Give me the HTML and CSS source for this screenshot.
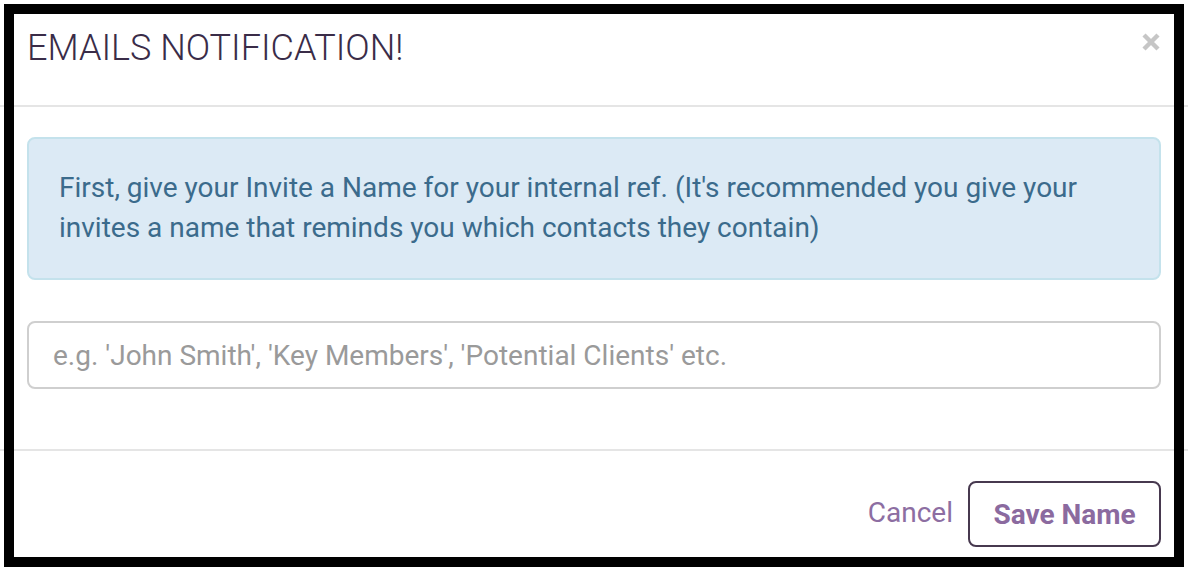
FILE: index.html
```html
<!DOCTYPE html>
<html>
<head>
<meta charset="utf-8">
<link rel="stylesheet" href="styles.css">
</head>
<body>
<div class="modal">
  <div class="modal-header">
    <h4 class="modal-title">EMAILS NOTIFICATION!</h4>
    <button class="close" aria-label="Close">
      <svg width="18" height="18" viewBox="0 0 18 18"><path d="M2 2 L16 16 M16 2 L2 16" stroke="#c6c6c6" stroke-width="4.4" fill="none"/></svg>
    </button>
  </div>
  <div class="modal-body">
    <div class="alert">First, give your Invite a Name for your internal ref. (It's recommended you give your invites a name that reminds you which contacts they contain)</div>
    <input class="form-control" type="text" placeholder="e.g. 'John Smith', 'Key Members', 'Potential Clients' etc.">
  </div>
  <div class="modal-footer">
    <a class="btn-link" href="#">Cancel</a>
    <button class="btn-save">Save Name</button>
  </div>
  <div class="frame"></div>
</div>
</body>
</html>
```
FILE: styles.css
```css
* { box-sizing: border-box; }
html, body { margin: 0; padding: 0; background: #fff; }
body { font-family: Roboto, "Noto Sans", sans-serif; width: 1188px; height: 568px; overflow: hidden; }
.modal { position: relative; width: 1188px; height: 568px; }
.modal-header {
  height: 107px;
  padding: 28px 27px 0 27px;
  border-bottom: 2px solid #e5e5e5;
  display: flex;
  justify-content: space-between;
  align-items: flex-start;
}
.modal-title {
  margin: 0;
  font-size: 36px;
  line-height: 40px;
  font-weight: 300;
  color: #3a2c48;
}
.close {
  border: 0; background: none; padding: 0; margin: 5px 1px 0 0;
  width: 18px; height: 18px; cursor: pointer; display: block;
}
.close svg { display: block; }
.modal-body { padding: 30px 27px 0 27px; height: 342px; }
.alert {
  background: #dceaf5;
  border: 2px solid #c4e2ec;
  border-radius: 8px;
  color: #3b6b8c;
  padding: 29px 30px 30px 30px;
  font-size: 28px;
  line-height: 40px;
  height: 143px;
}
.form-control {
  display: block;
  width: 100%;
  margin-top: 41px;
  height: 68px;
  border: 2px solid #cfcfcf;
  border-radius: 8px;
  padding: 0 24px;
  font-family: Roboto, "Noto Sans", sans-serif;
  font-size: 28px;
  color: #555;
  outline: none;
}
.form-control::placeholder { color: #9a9a9a; }
.modal-footer {
  border-top: 2px solid #e5e5e5;
  padding: 30px 27px 0 27px;
  display: flex;
  justify-content: flex-end;
  align-items: center;
  gap: 15px;
}
.btn-link {
  color: #8d6ea2;
  font-size: 28px;
  text-decoration: none;
  line-height: 40px;
  margin-top: -3px;
}
.btn-save {
  width: 193px;
  height: 66px;
  border: 2px solid #47394f;
  border-radius: 8px;
  background: #fff;
  color: #8b6a9f;
  font-family: Roboto, "Noto Sans", sans-serif;
  font-size: 28px;
  font-weight: 700;
  padding: 0;
}
.frame {
  position: absolute;
  left: 4px; top: 4px;
  width: 1180px; height: 563px;
  border: 10px solid #000;
  pointer-events: none;
}
```
